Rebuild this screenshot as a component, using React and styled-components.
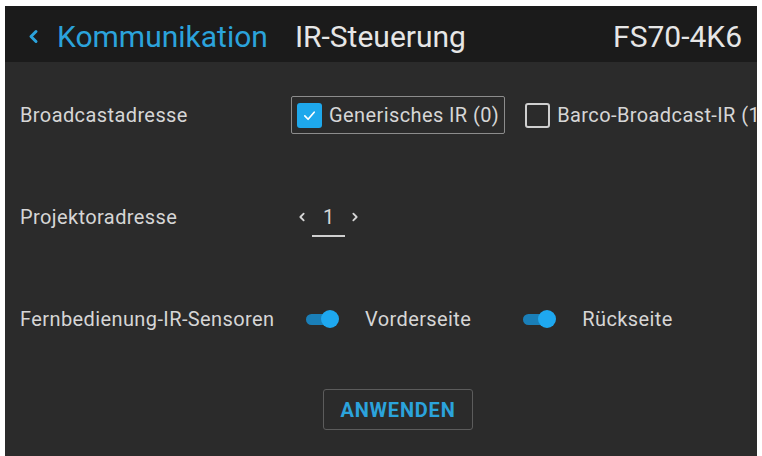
import styled, { createGlobalStyle } from "styled-components";

const GlobalStyle = createGlobalStyle`
  html, body {
    margin: 0;
    padding: 0;
    background: #ffffff;
    font-family: Roboto, "Liberation Sans", sans-serif;
  }
`;

const Screen = styled.div`
  width: 762px;
  height: 456px;
  box-sizing: border-box;
  padding: 6px 5px 0 5px;
  overflow: hidden;
`;

const Panel = styled.div`
  height: 100%;
  background: #2b2b2b;
  display: flex;
  flex-direction: column;
  overflow: hidden;
`;

const Header = styled.header`
  height: 56px;
  box-sizing: border-box;
  padding: 4px 15px 0 21px;
  background: #1b1b1b;
  display: flex;
  align-items: center;
`;

const BackLink = styled.a`
  display: flex;
  align-items: center;
  gap: 16px;
  color: #2ba3dc;
  font-size: 30px;
  text-decoration: none;
`;

const Title = styled.h1`
  margin: 0 0 0 27px;
  font-size: 30px;
  font-weight: 400;
  color: #e6e6e6;
  flex: 1;
`;

const Device = styled.span`
  font-size: 30px;
  color: #e6e6e6;
`;

const Content = styled.section`
  display: flex;
  flex-direction: column;
  padding: 2px 0 0 15px;
`;

const Row = styled.div`
  height: 102px;
  display: grid;
  grid-template-columns: 271px 1fr;
  align-items: center;
  white-space: nowrap;
`;

const Label = styled.span`
  font-size: 20px;
  letter-spacing: 0.4px;
  color: #d6d6d6;
`;

const Controls = styled.div`
  display: flex;
  align-items: center;
  gap: ${(p) => p.$gap || 0}px;
  padding-left: ${(p) => p.$indent || 0}px;
  overflow: hidden;
`;

const Option = styled.label`
  display: flex;
  align-items: center;
  gap: 7px;
  height: 38px;
  box-sizing: border-box;
  padding: 0 5px 0 5px;
  border: 1px solid ${(p) => (p.$focused ? "#8c8c8c" : "transparent")};
  border-radius: 2px;
  font-size: 20px;
  letter-spacing: 0.4px;
  color: #d6d6d6;
  flex: none;
`;

const Box = styled.span`
  width: 25px;
  height: 25px;
  box-sizing: border-box;
  border-radius: 3px;
  display: flex;
  align-items: center;
  justify-content: center;
  background: ${(p) => (p.$checked ? "#1ea8ec" : "transparent")};
  border: ${(p) => (p.$checked ? "none" : "2px solid #cfcfcf")};
`;

const Stepper = styled.div`
  display: flex;
  align-items: center;
  gap: 5px;
  padding-left: 6px;
`;

const Value = styled.span`
  position: relative;
  width: 33px;
  text-align: center;
  font-size: 20px;
  color: #d6d6d6;
  &::after {
    content: "";
    position: absolute;
    left: 0;
    right: 0;
    bottom: -8px;
    height: 2px;
    background: #cfcfcf;
  }
`;

const Toggle = styled.span`
  position: relative;
  width: 32px;
  height: 11px;
  border-radius: 6px;
  background: #1a7fb8;
  flex: none;
  &::after {
    content: "";
    position: absolute;
    right: -1px;
    top: -4px;
    width: 18px;
    height: 18px;
    border-radius: 50%;
    background: #1ea8f0;
  }
`;

const ToggleText = styled.span`
  font-size: 20px;
  letter-spacing: 0.4px;
  color: #d6d6d6;
  margin-left: 27px;
  margin-right: ${(p) => p.$after || 0}px;
`;

const Actions = styled.div`
  display: flex;
  padding: 19px 0 0 318px;
`;

const ApplyButton = styled.button`
  width: 150px;
  height: 41px;
  padding: 0;
  background: transparent;
  border: 1px solid #5c5c5c;
  border-radius: 3px;
  color: #2ba3dc;
  font-family: Roboto, "Liberation Sans", sans-serif;
  font-size: 20px;
  font-weight: 700;
  letter-spacing: 0.8px;
`;

const Chevron = ({ dir = "left", color = "#2ba3dc", size = 12, stroke = 2.6 }) => (
  <svg width={size} height={size} viewBox="0 0 12 12">
    <polyline
      points={dir === "left" ? "8,2 4,6 8,10" : "4,2 8,6 4,10"}
      fill="none"
      stroke={color}
      strokeWidth={stroke}
      strokeLinecap="round"
      strokeLinejoin="round"
    />
  </svg>
);

const Check = () => (
  <svg width="15" height="15" viewBox="0 0 16 16">
    <polyline
      points="3,8.5 6.5,12 13,4.5"
      fill="none"
      stroke="#ffffff"
      strokeWidth="1.8"
      strokeLinecap="round"
      strokeLinejoin="round"
    />
  </svg>
);

export default function App() {
  return (
    <>
      <GlobalStyle />
      <Screen>
        <Panel>
          <Header>
            <BackLink href="#">
              <Chevron size={15} stroke={2.4} />
              Kommunikation
            </BackLink>
            <Title>IR-Steuerung</Title>
            <Device>FS70-4K6</Device>
          </Header>
          <Content>
            <Row>
              <Label>Broadcastadresse</Label>
              <Controls $gap={14}>
                <Option $focused>
                  <Box $checked>
                    <Check />
                  </Box>
                  Generisches IR (0)
                </Option>
                <Option>
                  <Box />
                  Barco-Broadcast-IR (1)
                </Option>
              </Controls>
            </Row>
            <Row>
              <Label>Projektoradresse</Label>
              <Stepper>
                <Chevron color="#d6d6d6" size={10} stroke={2.2} />
                <Value>1</Value>
                <Chevron dir="right" color="#d6d6d6" size={10} stroke={2.2} />
              </Stepper>
            </Row>
            <Row>
              <Label>Fernbedienung-IR-Sensoren</Label>
              <Controls $indent={15}>
                <Toggle />
                <ToggleText $after={52}>Vorderseite</ToggleText>
                <Toggle />
                <ToggleText>Rückseite</ToggleText>
              </Controls>
            </Row>
          </Content>
          <Actions>
            <ApplyButton>ANWENDEN</ApplyButton>
          </Actions>
        </Panel>
      </Screen>
    </>
  );
}
